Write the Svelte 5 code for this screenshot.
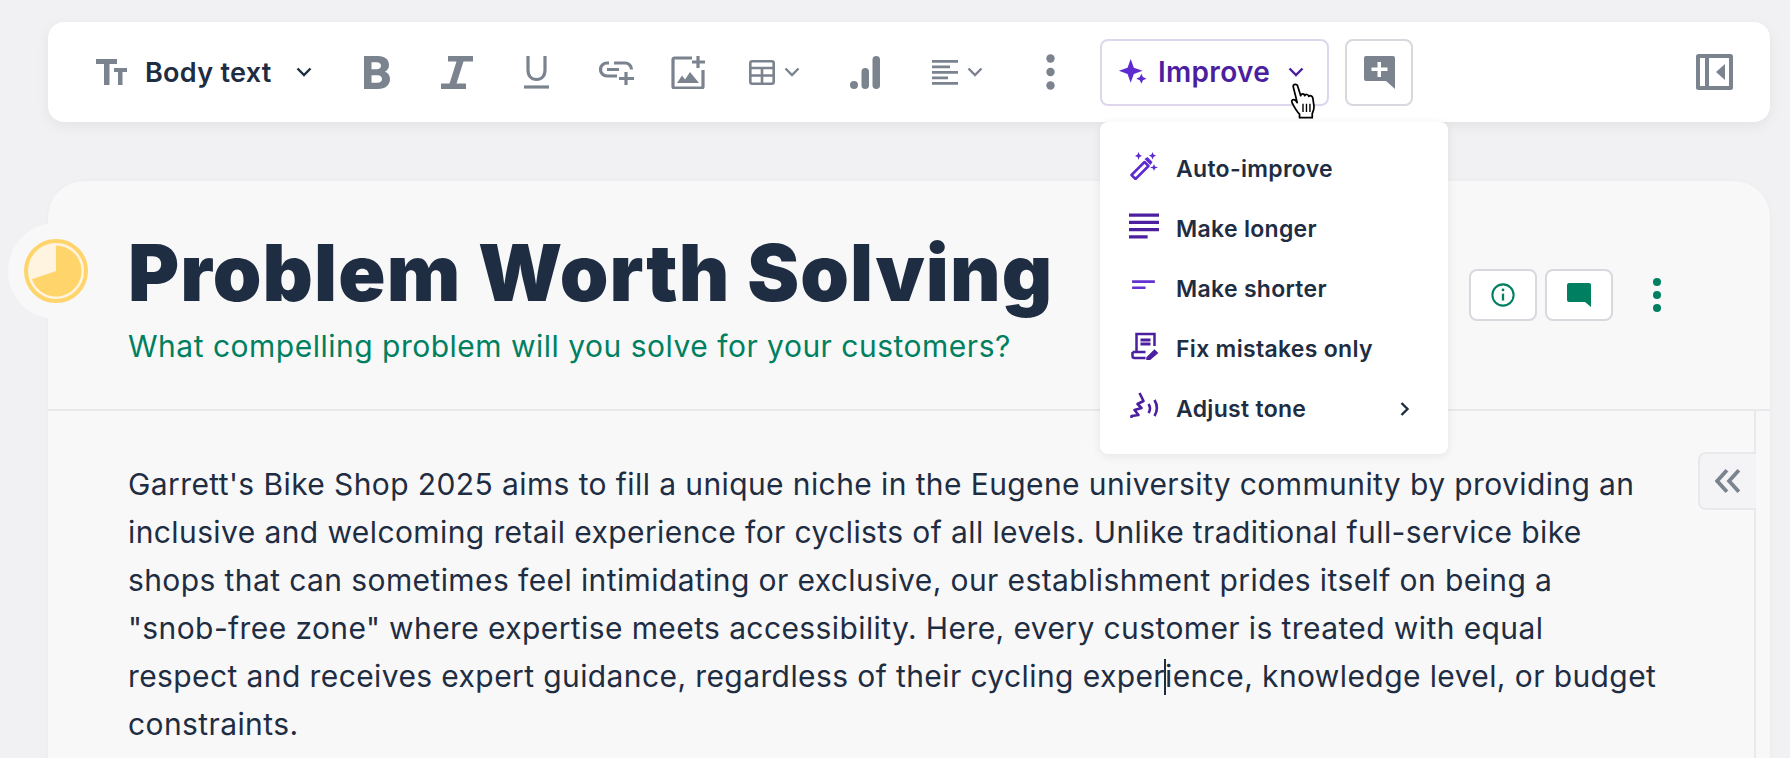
<script>
  const menu = ['Auto-improve', 'Make longer', 'Make shorter', 'Fix mistakes only', 'Adjust tone'];
</script>

<div class="page">
  <header class="toolbar">
    <div class="style-select">
      <svg class="tt" viewBox="0 0 31 26" fill="#7b838f"><path d="M0 0h21v5h-7.500v21H8V5H0zM18 9h13v4h-4.500v13h-4.500V13h-4z"/></svg>
      <span class="style-label">Body text</span>
      <svg class="chev dark" viewBox="0 0 16 10"><path d="M1.500 1.500L8 8l6.500-6.500"/></svg>
    </div>

    <svg class="ico bold" viewBox="0 0 26 33" fill="#7b838f"><path fill-rule="evenodd" d="M0 0h14c7 0 11 3.500 11 9 0 3-1.500 5.500-4 6.800 3 1 5 3.700 5 7.200 0 6-4.500 10-12 10H0zM7.500 6.200v7h5.300c2.500 0 4.200-1.300 4.200-3.500s-1.700-3.500-4.200-3.500zm0 13v7.600h6c2.800 0 4.500-1.500 4.500-3.800s-1.700-3.800-4.500-3.800z"/></svg>
    <svg class="ico italic" viewBox="0 0 32 33" fill="#7b838f"><path d="M7 0h25v5.500h-9.500L15.500 27.500H25V33H0v-5.500h8.500L15.500 5.500H7z"/></svg>
    <svg class="ico under" viewBox="0 0 25 33" fill="none" stroke="#7b838f" stroke-width="3.200"><path d="M4 0v14c0 6 3.500 9.500 8.500 9.500S21 20 21 14V0"/><path d="M0 31h25"/></svg>
    <svg class="ico link" viewBox="0 0 35 24" fill="none" stroke="#7b838f" stroke-width="3.200"><path d="M10 2H8a6.500 6.500 0 000 13h10M15 2h11a6.500 6.500 0 016.500 6.500M8 8.500h12M27 11v13M20 17.500h15"/></svg>
    <svg class="ico image" viewBox="0 0 34 33" fill="none" stroke="#7b838f" stroke-width="3.200"><path d="M21 2H3.600A1.600 1.600 0 002 3.600v26.800A1.600 1.600 0 003.600 32h26.800a1.600 1.600 0 001.600-1.600V14"/><path d="M27 0v12M21 6h13"/><path fill="#7b838f" stroke="none" d="M6 27l5-7.500 3 4 5-7.500 9 11z"/></svg>
    <span class="with-chev table">
      <svg class="tbl" viewBox="0 0 26 25" fill="none" stroke="#7b838f" stroke-width="2.600"><rect x="1.300" y="1.300" width="23.400" height="22.400" rx="2"/><path d="M1 8h24M1 15.500h24M13 8v16"/></svg>
      <svg class="chev" viewBox="0 0 16 10"><path d="M1.500 1.500L8 8l6.500-6.500"/></svg>
    </span>
    <svg class="ico chart" viewBox="0 0 30 33" fill="#7b838f"><circle cx="4" cy="29" r="4"/><rect x="11.500" y="12" width="7.500" height="21" rx="3.750"/><rect x="22.500" y="0" width="7.500" height="33" rx="3.750"/></svg>
    <span class="with-chev align">
      <svg class="tbl" viewBox="0 0 26 25" fill="#7b838f"><path d="M0 0h26v2.800H0zM0 5.500h18v2.800H0zM0 11h26v2.800H0zM0 16.500h16v2.800H0zM0 22h26v2.800H0z"/></svg>
      <svg class="chev" viewBox="0 0 16 10"><path d="M1.500 1.500L8 8l6.500-6.500"/></svg>
    </span>
    <svg class="ico dots" viewBox="0 0 9 36" fill="#7b838f"><circle cx="4.500" cy="4.500" r="4.200"/><circle cx="4.500" cy="18" r="4.200"/><circle cx="4.500" cy="31.500" r="4.200"/></svg>

    <div class="improve-wrap">
      <button class="improve">
        <svg class="spark" viewBox="0 0 24 24" fill="#5d2bd0"><path d="M9.500 0l2.800 7.700 7.700 2.800-7.700 2.800L9.500 21l-2.800-7.700L-1 10.500l7.700-2.800z"/><path d="M19 13l1.400 3.100 3.100 1.400-3.100 1.400L19 22l-1.400-3.100-3.100-1.400 3.100-1.400z"/></svg>
        <span class="improve-label">Improve</span>
        <svg class="chev purple" viewBox="0 0 16 10"><path d="M1.500 1.500L8 8l6.500-6.500"/></svg>
      </button>

      <svg class="cursor" viewBox="0 0 22 32">
        <path fill="#fff" stroke="#000" stroke-width="1.500" stroke-linejoin="round" d="M2.500 3c0-2.500 3.500-2.500 4 0l2.500 8c.5-2 3-2 3.500 0 .5-1.500 3-1.500 3.500.5 1-1 3-.5 3.500 1.500l1 7c.3 3-1 5-1.500 6.500V30H8v-3c-2-2-5-7-6.500-10-1-2 1-3.500 3-2l1.500 2z"/>
        <path fill="none" stroke="#000" stroke-width="1.200" d="M11 18v7M14 18v7M17 18v7"/>
      </svg>

      <div class="menu">
        {#each menu as item, i}
          <div class="menu-item">
            <span class="menu-ico">
              {#if i === 0}
                <svg viewBox="0 0 29 28" fill="#5d2bd0"><path fill="none" stroke="#5d2bd0" stroke-width="2.500" stroke-linejoin="round" d="M2 23l13-13 4 4L6 27z"/><path d="M15 7l3-2 5 5-2 3zM9 0l1 2.500L12.500 4 10 5 9 8 8 5 5.500 4 8 2.500zM23 0l1 2.500L26.500 3.500 24 5l-1 2.500L22 5l-2.500-1.500L22 2.500zM24.500 12l1 2.500 3 1-3 1-1 2.500-1-2.500-3-1 3-1z"/></svg>
              {:else if i === 1}
                <svg viewBox="0 0 29 24" fill="#4b1fa0"><path d="M0 0h29v3H0zM0 7h29v3H0zM0 14h29v3H0zM0 21h18v3H0z"/></svg>
              {:else if i === 2}
                <svg viewBox="0 0 29 24" fill="#6432d0"><path d="M3 6.500h22V9H3zM3 12.500h13V15H3z"/></svg>
              {:else if i === 3}
                <svg viewBox="0 0 29 28" fill="none" stroke="#4b1fa0" stroke-width="2.500"><path d="M7 20V2h18v12"/><path d="M11 8h10M11 12h10" stroke-width="3"/><path d="M3 20v4a2 2 0 002 2h11M3 20h13"/><path d="M18 26l7-7 2 2-7 6h-2z" fill="#4b1fa0"/></svg>
              {:else}
                <svg viewBox="0 0 29 28" fill="none" stroke="#4b1fa0" stroke-width="2.600" stroke-linejoin="round"><path d="M10 1l4 8-6 3 4 4-7 2 4 5-7 1 0 2"/><path d="M19 12c2 3 2 6 0 9M25 8c3 5 3 11 0 16"/></svg>
              {/if}
            </span>
            <span>{item}</span>
            {#if i === 4}
              <svg class="more" viewBox="0 0 10 14"><path d="M1.500 1l6 6-6 6"/></svg>
            {/if}
          </div>
        {/each}
      </div>
    </div>

    <button class="add-comment">
      <svg viewBox="0 0 31 33" fill="#7b838f"><path fill-rule="evenodd" d="M2 0h27a2 2 0 012 2v31l-9-8H2a2 2 0 01-2-2V2a2 2 0 012-2zm11.500 6v5.500H7.500v3.500h6v6H17v-6h6.500v-3.500H17V6z"/></svg>
    </button>

    <svg class="panel" viewBox="0 0 37 36" fill="#7b838f"><path fill-rule="evenodd" d="M2.500 0h32A2.500 2.500 0 0137 2.500v31a2.500 2.500 0 01-2.500 2.500h-32A2.500 2.500 0 010 33.500v-31A2.500 2.500 0 012.500 0zM4 4v28h5V4zm9 0v28h20V4zM29 10v16l-9-8z"/></svg>
  </header>

  <main class="card">
    <div class="badge">
      <svg viewBox="0 0 64 64">
        <circle cx="32" cy="32" r="30" fill="#fff4df" stroke="#ffd56b" stroke-width="4"/>
        <path fill="#ffd56b" d="M32 32V6.500A25.500 25.500 0 1 1 7.900 40.300z"/>
      </svg>
    </div>

    <section class="head">
      <div class="titles">
        <h1>Problem Worth Solving</h1>
        <p class="sub">What compelling problem will you solve for your customers?</p>
      </div>
      <div class="actions">
        <button class="act">
          <svg viewBox="0 0 26 26" fill="none" stroke="#008060" stroke-width="2.200"><circle cx="13" cy="13" r="11.500"/><path d="M13 11.500V19" stroke-width="2.500"/><circle cx="13" cy="7.500" r="1.500" fill="#008060" stroke="none"/></svg>
        </button>
        <button class="act">
          <svg viewBox="0 0 24 24" fill="#008060"><path d="M2 0h20a2 2 0 012 2v22l-6-5H2a2 2 0 01-2-2V2a2 2 0 012-2z"/></svg>
        </button>
        <svg class="act-dots" viewBox="0 0 8 34" fill="#008060"><circle cx="4" cy="4" r="4"/><circle cx="4" cy="17" r="4"/><circle cx="4" cy="30" r="4"/></svg>
      </div>
    </section>

    <section class="body">
      <p>
        Garrett's Bike Shop 2025 aims to fill a unique niche in the Eugene university community by providing an<br>
        inclusive and welcoming retail experience for cyclists of all levels. Unlike traditional full-service bike<br>
        shops that can sometimes feel intimidating or exclusive, our establishment prides itself on being a<br>
        "snob-free zone" where expertise meets accessibility. Here, every customer is treated with equal<br>
        respect and receives expert guidance, regardless of their cycling exper<span class="caret"></span>ience, knowledge level, or budget<br>
        constraints.
      </p>
      <div class="side-tab">
        <svg viewBox="0 0 24 24" fill="none" stroke="#7b838f" stroke-width="3.500"><path d="M11 2L2 12l9 10M22 2l-9 10 9 10"/></svg>
      </div>
    </section>
  </main>
</div>

<style>
  :global(body) {
    background: #f1f1f3;
    overflow: hidden;
  }

  .page {
    height: 758px;
    padding: 22px 20px 0 48px;
    box-sizing: border-box;
    overflow: hidden;
    font-family: Inter, "Open Sans", sans-serif;
    color: #1f2d43;
  }

  button {
    font-family: inherit;
    background: #fff;
    cursor: pointer;
  }

  .toolbar {
    display: flex;
    align-items: center;
    height: 100px;
    padding-left: 48px;
    background: #fff;
    border-radius: 16px;
    box-shadow: 0 4px 14px rgba(0, 0, 0, 0.06);
    position: relative;
    z-index: 2;
  }

  .style-select {
    display: flex;
    align-items: center;
  }

  .tt {
    width: 31px;
    height: 26px;
  }

  .style-label {
    width: 127px;
    margin-left: 18px;
    font-size: 27px;
    font-weight: 600;
    letter-spacing: 0.3px;
    white-space: nowrap;
  }

  .chev {
    width: 16px;
    height: 10px;
    fill: none;
    stroke: #7b838f;
    stroke-width: 2.400;
  }

  .chev.dark {
    margin-left: 24px;
    stroke: #1f2d43;
  }

  .chev.purple {
    stroke: #4b1fa0;
  }

  .bold { width: 26px; height: 33px; margin-left: 52px; }
  .italic { width: 32px; height: 33px; margin-left: 51px; }
  .under { width: 25px; height: 33px; margin-left: 51px; }
  .link { width: 35px; height: 24px; margin-left: 50px; margin-top: 2px; }
  .image { width: 34px; height: 33px; margin-left: 37px; }
  .chart { width: 30px; height: 33px; margin-left: 50px; }
  .dots { width: 9px; height: 36px; margin-left: 63px; }

  .with-chev {
    display: flex;
    align-items: center;
    gap: 9px;
  }

  .table { margin-left: 44px; }
  .align { margin-left: 52px; }

  .tbl {
    width: 26px;
    height: 25px;
  }

  .improve-wrap {
    position: relative;
    margin-left: 45px;
  }

  .improve {
    display: flex;
    align-items: center;
    width: 229px;
    height: 67px;
    padding: 0 0 0 18px;
    border: 2px solid #ddd6ec;
    border-radius: 8px;
    box-sizing: border-box;
    color: #4b1fa0;
    font-size: 28px;
    font-weight: 600;
    letter-spacing: 0.3px;
  }

  .spark {
    width: 27px;
    height: 27px;
    margin-right: 11px;
    overflow: visible;
  }

  .improve-label {
    width: 112px;
    text-align: left;
  }

  .improve .chev {
    margin-left: 18px;
  }

  .cursor {
    position: absolute;
    left: 189px;
    top: 44px;
    width: 28px;
    height: 37px;
    z-index: 4;
  }

  .menu {
    position: absolute;
    left: 0;
    top: 83px;
    width: 348px;
    height: 332px;
    padding-top: 17px;
    box-sizing: border-box;
    background: #fff;
    border-radius: 8px;
    box-shadow: 0 2px 10px rgba(0, 0, 0, 0.08);
    z-index: 3;
  }

  .menu-item {
    display: flex;
    align-items: center;
    height: 60px;
    padding-left: 29px;
    font-size: 23px;
    font-weight: 600;
    letter-spacing: 0.3px;
    white-space: nowrap;
  }

  .menu-ico {
    display: flex;
    width: 47px;
    flex: none;
    margin-bottom: 6px;
  }

  .menu-ico svg {
    width: 30px;
    height: 28px;
  }

  .more {
    width: 10px;
    height: 14px;
    margin-left: auto;
    margin-right: 38px;
    fill: none;
    stroke: #1f2d43;
    stroke-width: 2.400;
  }

  .add-comment {
    display: flex;
    align-items: center;
    justify-content: center;
    height: 67px;
    width: 68px;
    margin-left: 16px;
    padding: 0;
    border: 2px solid #d8d8de;
    border-radius: 8px;
  }

  .add-comment svg {
    width: 31px;
    height: 33px;
  }

  .panel {
    width: 37px;
    height: 36px;
    margin-left: auto;
    margin-right: 37px;
  }

  .card {
    position: relative;
    margin-top: 59px;
    height: 600px;
    background: #f8f8f9;
    border-radius: 36px 36px 0 0;
    box-shadow: 0 0 4px rgba(0, 0, 0, 0.03);
  }

  .badge {
    position: absolute;
    left: -40px;
    top: 42px;
    width: 96px;
    height: 96px;
    display: flex;
    align-items: center;
    justify-content: center;
    background: #f8f8f9;
    border-radius: 50%;
  }

  .badge svg {
    width: 64px;
    height: 64px;
  }

  .head {
    display: flex;
    justify-content: space-between;
    height: 230px;
    padding-left: 80px;
    box-sizing: border-box;
    border-bottom: 2px solid #e9e9ec;
  }

  .titles {
    padding-top: 52px;
  }

  h1 {
    margin: 0;
    font-size: 78px;
    line-height: 80px;
    font-weight: 900;
    letter-spacing: 1.1px;
    white-space: nowrap;
  }

  .sub {
    margin: 13px 0 0;
    color: #008060;
    font-size: 30px;
    line-height: 40px;
    letter-spacing: 0.5px;
    white-space: nowrap;
  }

  .actions {
    display: flex;
    align-items: center;
    gap: 8px;
    height: 52px;
    margin-top: 88px;
    margin-right: 109px;
  }

  .act {
    display: flex;
    align-items: center;
    justify-content: center;
    width: 68px;
    height: 52px;
    padding: 0;
    border: 2px solid #d8d8de;
    border-radius: 8px;
  }

  .act svg {
    width: 26px;
    height: 24px;
  }

  .act-dots {
    width: 8px;
    height: 34px;
    margin-left: 32px;
  }

  .body {
    position: relative;
    height: 370px;
    margin-right: 14px;
    padding: 49px 0 0 80px;
    box-sizing: border-box;
    border-right: 2px solid #e9e9ec;
  }

  .body p {
    margin: 0;
    font-size: 30px;
    line-height: 48px;
    letter-spacing: 0.4px;
    white-space: nowrap;
  }

  .caret {
    display: inline-block;
    width: 2px;
    height: 36px;
    margin: 0 -1px;
    vertical-align: -8px;
    background: #1f2d43;
  }

  .side-tab {
    position: absolute;
    right: -2px;
    top: 41px;
    width: 58px;
    height: 58px;
    display: flex;
    align-items: center;
    justify-content: center;
    box-sizing: border-box;
    background: #f4f4f6;
    border: 2px solid #e9e9ec;
    border-right: none;
    border-radius: 8px 0 0 8px;
  }

  .side-tab svg {
    width: 26px;
    height: 26px;
  }
</style>
